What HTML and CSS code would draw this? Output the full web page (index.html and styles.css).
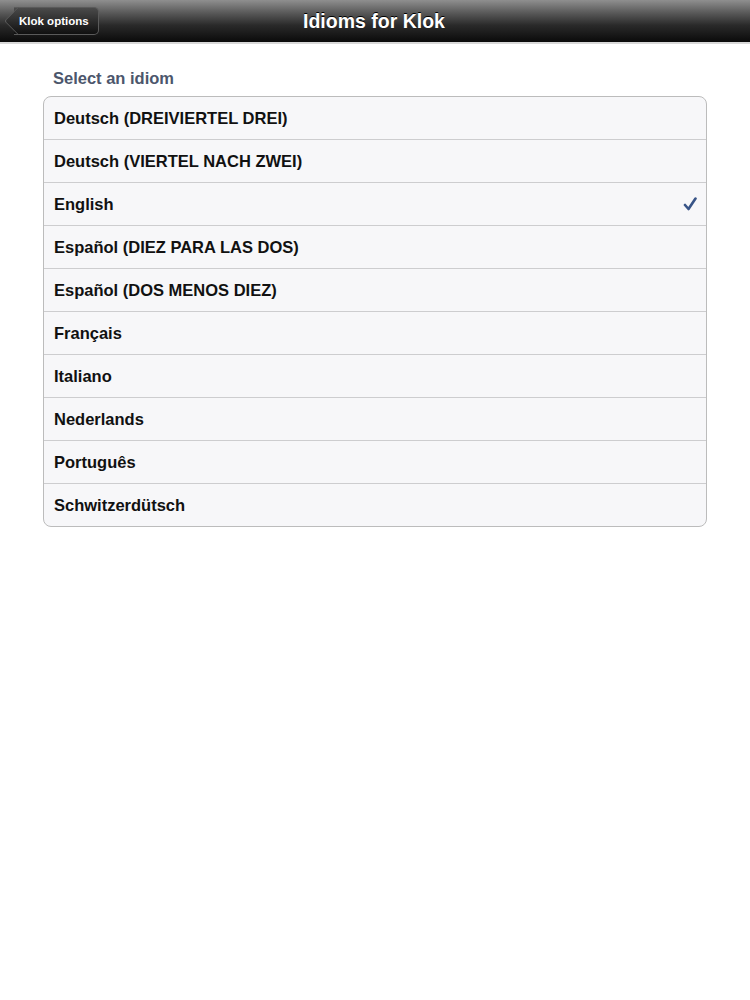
FILE: index.html
```html
<!DOCTYPE html>
<html>
    <head>
        <title>Idioms for Klok</title>
        <link rel="stylesheet" href="styles.css">
    </head>
    <body>
        <div class="nav_bar">
            <div class="back_btn">Klok options</div>
            <h1>Idioms for Klok</h1>
        </div>
        <div class="content">
            <h2>Select an idiom</h2>
            <ul class="table">
                <li>Deutsch (DREIVIERTEL DREI)</li>
                <li>Deutsch (VIERTEL NACH ZWEI)</li>
                <li class="checked">English
                    <svg class="check" width="14" height="14" viewBox="0 0 14 14"><path d="M2 8 L5.5 12 L12.5 1.5" fill="none" stroke="#385487" stroke-width="2.6" stroke-linecap="round" stroke-linejoin="round"/></svg>
                </li>
                <li>Español (DIEZ PARA LAS DOS)</li>
                <li>Español (DOS MENOS DIEZ)</li>
                <li>Français</li>
                <li>Italiano</li>
                <li>Nederlands</li>
                <li>Português</li>
                <li>Schwitzerdütsch</li>
            </ul>
        </div>
    </body>
</html>
```

FILE: styles.css
```css
body {
	margin: 0;
	background: #ffffff;
	font-family: "Liberation Sans", Arial, sans-serif;
}
.nav_bar {
	position: relative;
	height: 42px;
	display: flex;
	align-items: center;
	justify-content: center;
	background: linear-gradient(#8f8f8f 0%, #5a5a5a 30%, #2a2a2a 60%, #0a0a0a 100%);
	border-bottom: 2px solid #d8d8d8;
}
.nav_bar h1 {
	margin: 0;
	font-size: 19.5px;
	color: #ffffff;
	text-shadow: 0 -1px 0 #000;
	padding-right: 2px;
}
.back_btn {
	position: absolute;
	z-index: 1;
	left: 14px;
	top: 7px;
	height: 26px;
	padding: 0 9px 0 5px;
	display: flex;
	align-items: center;
	font-size: 11.5px;
	font-weight: bold;
	color: #ffffff;
	background: linear-gradient(#4a4a4a, #101010);
	border: 1px solid #5a5a5a;
	border-left: none;
	border-radius: 0 5px 5px 0;
}
.back_btn::before {
	content: "";
	position: absolute;
	left: -6px;
	top: 3px;
	width: 19px;
	height: 19px;
	background: linear-gradient(135deg, #4a4a4a, #101010);
	border-left: 1px solid #5a5a5a;
	border-bottom: 1px solid #5a5a5a;
	border-radius: 0 0 0 3px;
	transform: rotate(45deg);
	z-index: -1;
}
.content {
	padding: 25px 43px 0 43px;
}
h2 {
	margin: 0 0 8px 10px;
	font-size: 16.5px;
	color: #4c566c;
}
.table {
	list-style: none;
	margin: 0;
	padding: 0;
	border: 1px solid #bcbcbc;
	border-radius: 8px;
	background: #f7f7f9;
	overflow: hidden;
}
.table li {
	height: 42px;
	display: flex;
	align-items: center;
	justify-content: space-between;
	padding: 0 9px 0 10px;
	font-size: 16.5px;
	font-weight: bold;
	color: #111111;
	border-top: 1px solid #cdcdcf;
}
.table li:first-child {
	border-top: none;
}
```
